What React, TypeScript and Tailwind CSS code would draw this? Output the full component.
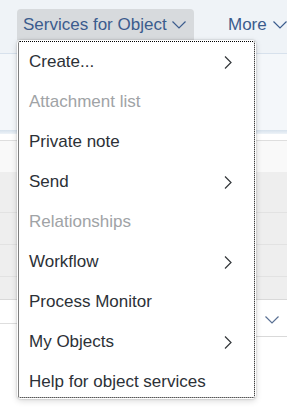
import React from 'react';

type Item = { label: string; disabled?: boolean; sub?: boolean };

const items: Item[] = [
  { label: 'Create...', sub: true },
  { label: 'Attachment list', disabled: true },
  { label: 'Private note' },
  { label: 'Send', sub: true },
  { label: 'Relationships', disabled: true },
  { label: 'Workflow', sub: true },
  { label: 'Process Monitor' },
  { label: 'My Objects', sub: true },
  { label: 'Help for object services' },
];

function ChevronDown({ className = '' }: { className?: string }) {
  return (
    <svg width="14" height="8" viewBox="0 0 14 8" className={className}>
      <polyline points="0.5,0.5 7,7 13.5,0.5" fill="none" stroke="currentColor" strokeWidth="1.2" />
    </svg>
  );
}

function ChevronRight() {
  return (
    <svg width="8" height="13" viewBox="0 0 8 13" className="text-[#32363a]">
      <polyline points="1,0.5 7,6.5 1,12.5" fill="none" stroke="currentColor" strokeWidth="1.2" />
    </svg>
  );
}

export default function App() {
  return (
    <div className="relative w-[287px] h-[410px] overflow-hidden bg-white text-[17px] font-['Liberation_Sans',Arial,sans-serif]">
      {/* Toolbar */}
      <div className="h-[54px] bg-[#eff3f7] border-b border-[#d7e1ec] flex items-start pt-[9px] pl-[17px]">
        <div className="h-[31px] w-[177px] bg-[#d7dadd] rounded-t-[4px] flex items-center pl-[6px] gap-[5px] text-[#3b5c8d]">
          <span>Services for Object</span>
          <ChevronDown className="mt-[1px]" />
        </div>
        <div className="ml-[34px] h-[31px] flex items-center gap-[6px] text-[#3b5c8d]">
          <span>More</span>
          <ChevronDown className="mt-[1px]" />
        </div>
      </div>

      {/* Object header */}
      <div className="h-[76px] bg-[#f4f7fa]" />
      <div className="h-[4px] bg-gradient-to-b from-[#d6e1ec] to-[#eef3f8]" />

      {/* Table */}
      <div className="h-[7px] bg-white border-b border-[#dedede]" />
      <div className="h-[31px] bg-[#f9f9f9]" />
      <div className="bg-[#eeeeee]">
        <div className="h-[41px] border-b border-[#e2e2e2]" />
        <div className="h-[32px] border-b border-[#e2e2e2]" />
        <div className="h-[32px] border-b border-[#e2e2e2]" />
        <div className="h-[23px] border-b border-[#d9d9d9]" />
      </div>
      <div className="flex">
        <div className="w-[256px] h-[24px] border-b border-[#dedede]" />
        <div className="flex-1 h-[37px] border-b border-[#d9d9d9] flex items-center justify-center text-[#5a7093]">
          <ChevronDown className="mt-[4px]" />
        </div>
      </div>

      {/* Dropdown menu */}
      <div className="absolute left-[17px] top-[40px] w-[239px] h-[359px] bg-white rounded-[4px] shadow-[0_0_2px_rgba(0,0,0,0.25),0_2px_6px_rgba(0,0,0,0.15)]">
        <div className="absolute inset-[1px] border border-dotted border-black rounded-[2px] pointer-events-none" />
        <ul className="flex flex-col pt-[2px]">
          {items.map((it) => (
            <li
              key={it.label}
              className={`h-[40px] flex items-center justify-between pl-[12px] pr-[24px] ${
                it.disabled ? 'text-[#a0a3a6]' : 'text-[#2c3137]'
              }`}
            >
              <span>{it.label}</span>
              {it.sub && <ChevronRight />}
            </li>
          ))}
        </ul>
      </div>
    </div>
  );
}
